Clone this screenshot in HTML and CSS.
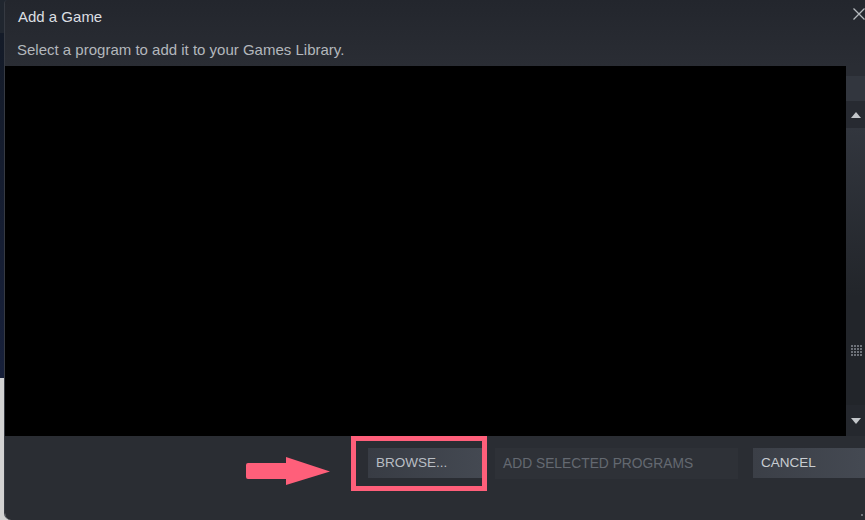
FILE: index.html
```html
<!DOCTYPE html>
<html lang="en">
  <head>
    <meta charset="UTF-8" />
    <meta name="viewport" content="width=device-width, initial-scale=1.0" />
    <title>Add a Game</title>
    <link rel="stylesheet" href="styles.css">
  </head>
  <body>
    <div class="dialog">
      <header class="dialog__header">
        <div class="dialog__title-row">
          <span class="dialog__title">Add a Game</span>
          <button class="dialog__close" aria-label="Close">
            <svg width="12" height="12" viewBox="0 0 12 12">
              <path d="M0.5 0.5 L11.5 11.5 M11.5 0.5 L0.5 11.5" stroke="#b4b8bc" stroke-width="1.3" fill="none" />
            </svg>
          </button>
        </div>
        <p class="dialog__subtitle">Select a program to add it to your Games Library.</p>
      </header>

      <div class="dialog__body">
        <div class="program-list"></div>
        <div class="scrollbar">
          <div class="scrollbar__cap"></div>
          <div class="scrollbar__pad"></div>
          <div class="scrollbar__btn">
            <svg width="10" height="6" viewBox="0 0 10 6"><path d="M5 0 L10 6 L0 6 Z" fill="#c3c6ca" /></svg>
          </div>
          <div class="scrollbar__thumb"></div>
          <div class="scrollbar__track">
            <svg class="scrollbar__grip" width="11" height="12" viewBox="0 0 11 12">
              <g fill="#6d7178">
                <rect x="0" y="0" width="2" height="2" /><rect x="3" y="0" width="2" height="2" /><rect x="6" y="0" width="2" height="2" /><rect x="9" y="0" width="2" height="2" />
                <rect x="0" y="3" width="2" height="2" /><rect x="3" y="3" width="2" height="2" /><rect x="6" y="3" width="2" height="2" /><rect x="9" y="3" width="2" height="2" />
                <rect x="0" y="6" width="2" height="2" /><rect x="3" y="6" width="2" height="2" /><rect x="6" y="6" width="2" height="2" /><rect x="9" y="6" width="2" height="2" />
                <rect x="0" y="9" width="2" height="2" /><rect x="3" y="9" width="2" height="2" /><rect x="6" y="9" width="2" height="2" /><rect x="9" y="9" width="2" height="2" />
              </g>
            </svg>
          </div>
          <div class="scrollbar__btn scrollbar__btn--down">
            <svg width="10" height="6" viewBox="0 0 10 6"><path d="M0 0 L10 0 L5 6 Z" fill="#c3c6ca" /></svg>
          </div>
        </div>
        <div class="dialog__edge"></div>
      </div>

      <footer class="dialog__footer">
        <button class="btn btn--browse">BROWSE...</button>
        <button class="btn btn--disabled" disabled>ADD SELECTED PROGRAMS</button>
        <button class="btn btn--cancel">CANCEL</button>

        <!-- callout drawn over the footer -->
        <svg class="callout-arrow" width="84" height="28" viewBox="0 0 84 28">
          <path d="M2 6 H40 V0 L84 14.5 L40 28 V22 H2 Q0 22 0 20 V8 Q0 6 2 6 Z" fill="#ff5f7a" />
        </svg>
        <div class="callout-box"></div>
        <span class="resize-dot"></span>
      </footer>
    </div>
  </body>
</html>
```

FILE: styles.css
```css
/* Global styles */
html,
body,
* {
  padding: 0;
  margin: 0;
  box-sizing: border-box;
  font-family: "Liberation Sans", Arial, Helvetica, sans-serif;
}

:root {
  --headerTop: #23262d;
  --headerBottom: #2a2d34;
  --footerColor: #2a2d33;
  --pinkColor: #ff5f7a;
  --titleColor: #dcdfe2;
  --subtitleColor: #b3b7bc;
}

body {
  width: 865px;
  height: 520px;
  overflow: hidden;
  display: flex;
  background: linear-gradient(
    to bottom,
    #20262f 0,
    #20262f 33px,
    #141b28 33px,
    #17203a 378px,
    #d2d2d2 378px
  );
}

.dialog {
  flex: none;
  width: 880px;
  height: 520px;
  margin-left: 4px;
  border-left: 1px solid #363a42;
  border-radius: 4px 0 0 7px;
  overflow: hidden;
  display: flex;
  flex-direction: column;
}

/* Header */
.dialog__header {
  height: 66px;
  padding: 8px 0 0 12px;
  background: linear-gradient(to bottom, var(--headerTop), var(--headerBottom));
}

.dialog__title-row {
  display: flex;
  align-items: flex-start;
}

.dialog__title {
  padding-left: 1px;
  font-size: 15px;
  line-height: 18px;
  color: var(--titleColor);
}

.dialog__close {
  margin: 0 19px 0 auto;
  width: 12px;
  height: 12px;
  border: none;
  background: none;
  display: flex;
}

.dialog__subtitle {
  margin-top: 15px;
  font-size: 15px;
  line-height: 17px;
  color: var(--subtitleColor);
}

/* Program list */
.dialog__body {
  height: 370px;
  display: flex;
}

.program-list {
  flex: none;
  width: 841px;
  background-color: #000;
}

.scrollbar {
  flex: none;
  width: 19px;
  display: flex;
  flex-direction: column;
  background-color: #22252a;
}

.scrollbar__cap {
  height: 10px;
  background-color: #2a2d34;
}

.scrollbar__pad {
  height: 25px;
  background-color: #32363e;
}

.scrollbar__btn {
  height: 27px;
  display: flex;
  justify-content: center;
  align-items: center;
  background-color: #272a31;
}

.scrollbar__btn--down {
  height: 31px;
  padding-top: 13px;
  align-items: flex-start;
  background-color: #25282e;
}

.scrollbar__thumb {
  height: 169px;
  background: linear-gradient(to bottom, #32363e, #22252a);
}

.scrollbar__track {
  flex: 1;
  padding: 48px 0 0 5px;
}

.scrollbar__grip {
  display: block;
}

.dialog__edge {
  flex: 1;
  background-color: #2a2d33;
}

/* Footer */
.dialog__footer {
  position: relative;
  flex: 1;
  display: flex;
  align-items: flex-start;
  padding: 12px 0 0 363px;
  background-color: var(--footerColor);
}

.btn {
  flex: none;
  height: 30px;
  padding-left: 8px;
  border: none;
  text-align: left;
  font-size: 13.5px;
  line-height: 30px;
}

.btn--browse {
  width: 115px;
  color: #b9bec4;
  background: linear-gradient(to right, #383c44, #444952);
}

.btn--disabled {
  width: 243px;
  height: 31px;
  margin-left: 12px;
  font-size: 13.8px;
  color: #646971;
  background-color: #2e3137;
}

.btn--cancel {
  width: 120px;
  margin-left: 15px;
  color: #c9cdd1;
  background: linear-gradient(to right, #3b3f47, #454a53);
}

.callout-arrow {
  position: absolute;
  left: 241px;
  top: 21px;
}

.callout-box {
  position: absolute;
  left: 346px;
  top: 0;
  width: 136px;
  height: 55px;
  border: 5px solid var(--pinkColor);
}

.resize-dot {
  position: absolute;
  left: 856px;
  top: 78px;
  width: 2px;
  height: 2px;
  background-color: #70747a;
}
```
